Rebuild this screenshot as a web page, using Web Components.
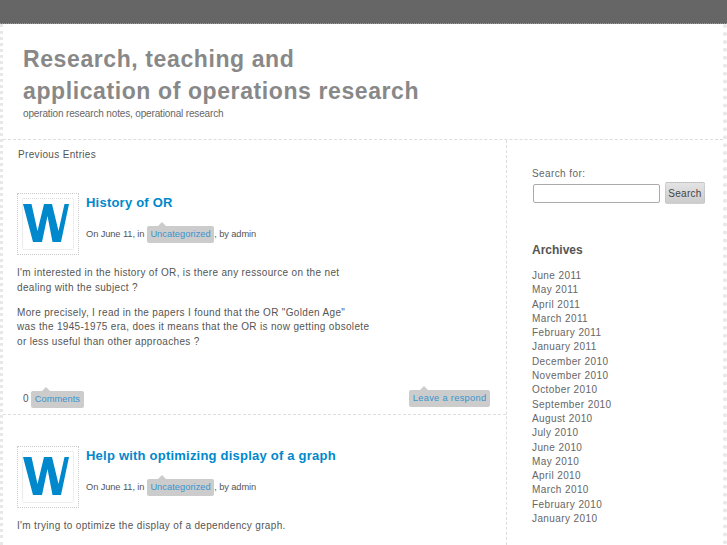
<!DOCTYPE html>
<html>
<head>
<meta charset="utf-8">
<style>
html, body { margin: 0; padding: 0; background: #fff; height: 545px; overflow: hidden; }
body { font-family: "Liberation Sans", Arial, sans-serif; font-size: 10px; color: #555; }
</style>
</head>
<body>
<or-page>
	<or-header slot="header" title1="Research, teaching and" title2="application of operations research" tagline="operation research notes, operational research"></or-header>
	<div slot="main">
		<or-nav>Previous Entries</or-nav>
		<or-post heading="History of OR" comments="0" respond>
			<p>I'm interested in the history of OR, is there any ressource on the net<br>dealing with the subject ?</p>
			<p>More precisely, I read in the papers I found that the OR "Golden Age"<br>was the 1945-1975 era, does it means that the OR is now getting obsolete<br>or less useful than other approaches ?</p>
		</or-post>
		<or-post heading="Help with optimizing display of a graph">
			<p>I'm trying to optimize the display of a dependency graph.</p>
		</or-post>
	</div>
	<or-sidebar slot="side"></or-sidebar>
</or-page>

<script>
const ARCHIVES = ["June 2011","May 2011","April 2011","March 2011","February 2011","January 2011","December 2010","November 2010","October 2010","September 2010","August 2010","July 2010","June 2010","May 2010","April 2010","March 2010","February 2010","January 2010"];

class OrPage extends HTMLElement {
	constructor(){
		super();
		this.attachShadow({mode: "open"});
		this.shadowRoot.innerHTML = `
			<style>
				:host { display: block; }
				#bar { height: 23px; background: #666; border-bottom: 1px dotted #999; }
				#frame {
					border-left: 3px dotted #e8e8e8;
					border-right: 4px dotted #e8e8e8;
					height: 521px;
					overflow: hidden;
				}
				#cols { display: flex; border-top: 1px dashed #ddd; height: 405px; }
				#main { width: 503px; border-right: 1px dashed #ddd; }
				#side { flex: 1; }
			</style>
			<div id="bar"></div>
			<div id="frame">
				<slot name="header"></slot>
				<div id="cols">
					<div id="main"><slot name="main"></slot></div>
					<div id="side"><slot name="side"></slot></div>
				</div>
			</div>
		`;
	}
}

class OrHeader extends HTMLElement {
	constructor(){
		super();
		this.attachShadow({mode: "open"});
	}
	connectedCallback(){
		this.shadowRoot.innerHTML = `
			<style>
				:host { display: block; height: 115px; box-sizing: border-box; padding: 19px 0 0 20px; }
				h1 { margin: 0; font-size: 23px; line-height: 32px; font-weight: bold; color: #888; letter-spacing: 0.6px; }
				div { font-size: 10px; line-height: 14px; color: #666; letter-spacing: -0.15px; }
			</style>
			<h1>${this.getAttribute("title1")}<br>${this.getAttribute("title2")}</h1>
			<div>${this.getAttribute("tagline")}</div>
		`;
	}
}

class OrNav extends HTMLElement {
	constructor(){
		super();
		this.attachShadow({mode: "open"});
		this.shadowRoot.innerHTML = `
			<style>
				:host { display: block; height: 53px; box-sizing: border-box; padding: 8px 0 0 15px; font-size: 10px; line-height: 14px; color: #555; letter-spacing: 0.33px; }
			</style>
			<slot></slot>
		`;
	}
}

class OrTag extends HTMLElement {
	constructor(){
		super();
		this.attachShadow({mode: "open"});
		this.shadowRoot.innerHTML = `
			<style>
				:host {
					display: inline-block; position: relative;
					background: #ccc; color: #3a94cc; border-radius: 2px;
					padding: 0 3.5px; height: 17px; line-height: 17px;
					font-size: 9.3px; letter-spacing: 0.03px; white-space: nowrap;
				}
				:host::before {
					content: ""; position: absolute; left: 11px; top: -4px;
					border-left: 4px solid transparent; border-right: 4px solid transparent;
					border-bottom: 4px solid #ccc;
				}
			</style>
			<slot></slot>
		`;
	}
}

class OrAvatar extends HTMLElement {
	constructor(){
		super();
		this.attachShadow({mode: "open"});
		this.shadowRoot.innerHTML = `
			<style>
				:host { display: block; width: 62px; height: 62px; box-sizing: border-box; border: 1px dotted #ccc; padding: 4px; flex: none; }
				div { box-sizing: border-box; width: 52px; height: 52px; border: 1px dotted #ddd; border-radius: 2px; }
				svg { display: block; margin: 5px 0 0 0; }
			</style>
			<div>
				<svg width="50" height="38" viewBox="0 0 50 38">
					<path fill="#0088cc" d="M0 0h8.500l6 27L21 0h8l6.500 27L41.500 0H46l-8 38h-8.500L24.500 12 19 38h-9z"/>
				</svg>
			</div>
		`;
	}
}

class OrPost extends HTMLElement {
	constructor(){
		super();
		this.attachShadow({mode: "open"});
	}
	connectedCallback(){
		const heading = this.getAttribute("heading");
		const foot = this.hasAttribute("comments") ? `
			<div id="foot">
				<span>${this.getAttribute("comments")} <or-tag>Comments</or-tag></span>
				<or-tag class="wide">Leave a respond</or-tag>
			</div>` : "";
		this.shadowRoot.innerHTML = `
			<style>
				:host { display: block; padding: 0 16px 0 14px; }
				:host([comments]) { border-bottom: 1px dashed #ddd; height: 222px; box-sizing: border-box; margin-bottom: 31px; position: relative; }
				#head { display: flex; gap: 7px; }
				h2 { margin: 0; padding-top: 1px; font-size: 13px; line-height: 18px; font-weight: bold; color: #0088cc; letter-spacing: 0.22px; }
				#meta { margin-top: 14px; font-size: 9.3px; line-height: 17px; color: #555; letter-spacing: -0.1px; }
				#body { margin-top: 11.4px; font-size: 10px; line-height: 14.5px; color: #555; letter-spacing: 0.33px; }
				::slotted(p) { margin: 0 0 10.5px 0; }
				#foot { position: absolute; left: 20px; right: 16px; top: 197px; display: flex; justify-content: space-between; font-size: 10px; line-height: 18px; color: #555; }
				or-tag.wide { letter-spacing: 0.3px; }
			</style>
			<div id="head">
				<or-avatar></or-avatar>
				<div id="info">
					<h2>${heading}</h2>
					<div id="meta">On June 11, in <or-tag>Uncategorized</or-tag>, by admin</div>
				</div>
			</div>
			<div id="body"><slot></slot></div>
			${foot}
		`;
	}
}

class OrSidebar extends HTMLElement {
	constructor(){
		super();
		this.attachShadow({mode: "open"});
		this.shadowRoot.innerHTML = `
			<style>
				:host { display: block; padding: 27px 0 0 25px; font-size: 10px; color: #666; letter-spacing: 0.4px; }
				label { display: block; line-height: 14px; }
				form { display: flex; align-items: center; gap: 5px; margin-top: 1px; }
				input { box-sizing: border-box; width: 127px; height: 19px; margin: 0 0 0 1px; padding: 0; background: #fff; border: 1px solid #aaa; border-radius: 2px; }
				button { box-sizing: border-box; width: 40px; height: 22px; padding: 0; font: 10px "Liberation Sans", Arial, sans-serif; letter-spacing: 0.3px; color: #444; background: linear-gradient(#e4e4e4, #ccc); border: 1px dotted #bbb; border-radius: 2px; }
				h3 { margin: 38px 0 11px; font-size: 12px; line-height: 16px; font-weight: bold; color: #555; letter-spacing: 0; }
				ul { list-style: none; margin: 0; padding: 0; line-height: 14.3px; }
			</style>
			<label>Search for:</label>
			<form><input type="text"><button type="button">Search</button></form>
			<h3>Archives</h3>
			<ul>${ARCHIVES.map(a => `<li>${a}</li>`).join("")}</ul>
		`;
	}
}

customElements.define("or-page", OrPage);
customElements.define("or-header", OrHeader);
customElements.define("or-nav", OrNav);
customElements.define("or-tag", OrTag);
customElements.define("or-avatar", OrAvatar);
customElements.define("or-post", OrPost);
customElements.define("or-sidebar", OrSidebar);
</script>
</body>
</html>
